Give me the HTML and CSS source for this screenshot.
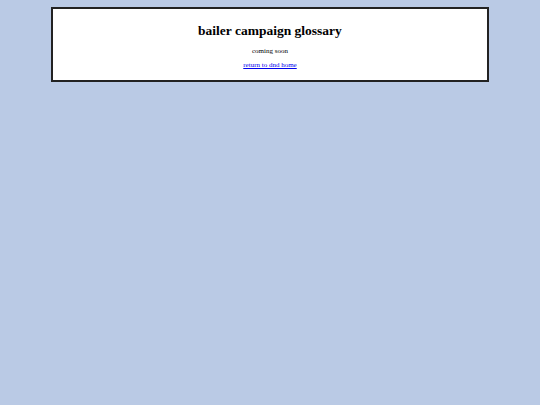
FILE: index.html
```html
<!DOCTYPE html>
<html lang="en">
<head>
    <meta charset="UTF-8">
    <title>bailer campaign glossary</title>
    <link rel="stylesheet" href="styles.css">
</head>
<body>
    <div class="box">
        <h1>bailer campaign glossary</h1>
        <p class="note">coming soon</p>
        <p class="back"><a href="#">return to dnd home</a></p>
    </div>
</body>
</html>
```

FILE: styles.css
```css
body {
    margin: 0;
    padding: 7px 0;
    background: #bacae5;
    font-family: 'Liberation Serif', 'Times New Roman', serif;
    color: #000;
}
.box {
    width: 434px;
    margin: 0 auto;
    background: #fff;
    border: 2px solid #222;
    text-align: center;
    padding: 14px 0 11px;
}
h1 {
    font-size: 13.5px;
    line-height: 15px;
    margin: 0 0 9px;
}
.note {
    font-size: 7px;
    line-height: 8px;
    margin: 0 0 6px;
}
.back {
    font-size: 7px;
    line-height: 8px;
    margin: 0;
}
a {
    color: #0000ee;
}
```
